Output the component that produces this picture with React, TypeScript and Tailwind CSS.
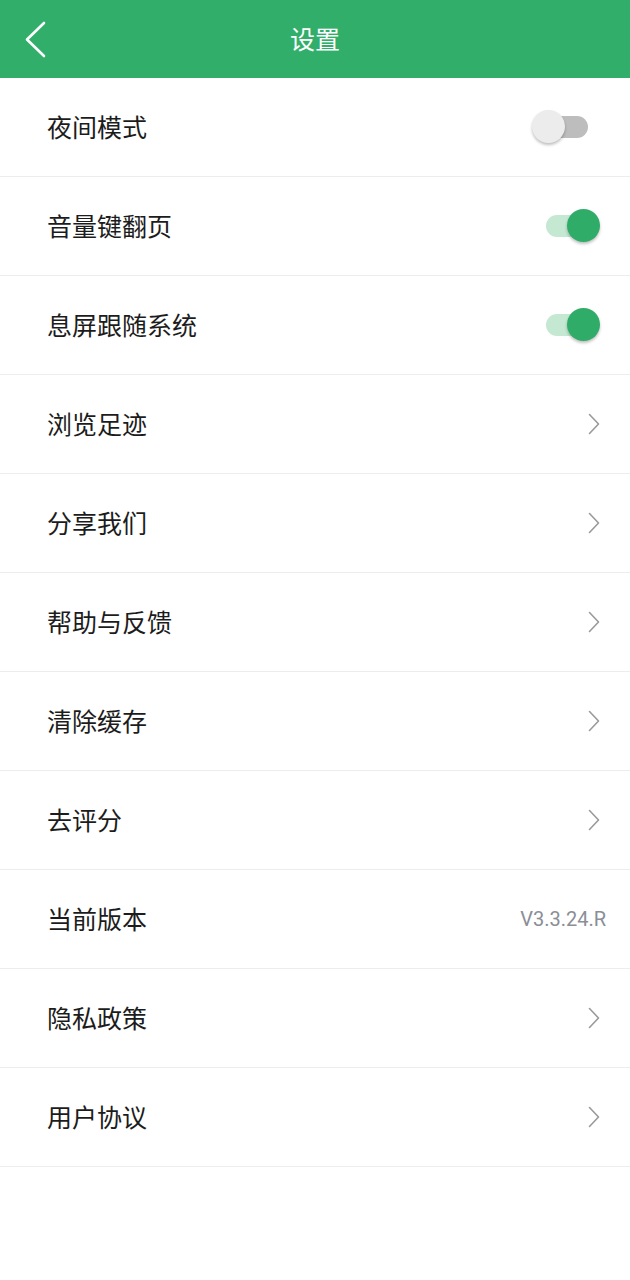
import { useState } from "react";

type Row = { label: string; kind: "switch" | "link" | "text"; on?: boolean; value?: string };

const rows: Row[] = [
  { label: "夜间模式", kind: "switch", on: false },
  { label: "音量键翻页", kind: "switch", on: true },
  { label: "息屏跟随系统", kind: "switch", on: true },
  { label: "浏览足迹", kind: "link" },
  { label: "分享我们", kind: "link" },
  { label: "帮助与反馈", kind: "link" },
  { label: "清除缓存", kind: "link" },
  { label: "去评分", kind: "link" },
  { label: "当前版本", kind: "text", value: "V3.3.24.R" },
  { label: "隐私政策", kind: "link" },
  { label: "用户协议", kind: "link" },
];

function Toggle({ initial }: { initial: boolean }) {
  const [on, setOn] = useState(initial);
  return (
    <button onClick={() => setOn(!on)} className="relative h-[34px] w-[68px]">
      <span
        className={`absolute left-[14px] top-[6px] h-[22px] w-[42px] rounded-full ${
          on ? "bg-[#c4e8d2]" : "bg-[#bdbdbd]"
        }`}
      />
      <span
        className={`absolute top-0 h-[33px] w-[33px] rounded-full shadow-[0_2px_3px_rgba(0,0,0,0.25)] ${
          on ? "left-[35px] bg-[#2fad68]" : "left-0 bg-[#ececec]"
        }`}
      />
    </button>
  );
}

export default function App() {
  return (
    <div className="min-h-[1280px] w-[630px] bg-white font-['Noto_Sans_CJK_SC',sans-serif]">
      <header className="relative flex h-[78px] items-center justify-center bg-[#31af6a]">
        <svg className="absolute left-[24px] top-[21px]" width="22" height="37" viewBox="0 0 22 37" fill="none">
          <path d="M20 2L3 18.5L20 35" stroke="white" strokeWidth="2.6" strokeLinecap="round" strokeLinejoin="round" />
        </svg>
        <h1 className="text-[25px] text-white">设置</h1>
      </header>
      <ul>
        {rows.map((r) => (
          <li
            key={r.label}
            className="flex h-[99px] items-center justify-between border-b border-[#ededed] pl-[47px] pr-[30px]"
          >
            <span className="text-[25px] text-[#1c1c1c]">{r.label}</span>
            {r.kind === "switch" && <Toggle initial={!!r.on} />}
            {r.kind === "link" && (
              <svg width="12" height="22" viewBox="0 0 12 22" fill="none">
                <path d="M1.5 1.5L10.5 11L1.5 20.5" stroke="#9a9a9a" strokeWidth="1.6" strokeLinecap="round" strokeLinejoin="round" />
              </svg>
            )}
            {r.kind === "text" && (
              <span className="mr-[-6px] font-['Roboto',sans-serif] text-[20px] text-[#8a8e96]">{r.value}</span>
            )}
          </li>
        ))}
      </ul>
    </div>
  );
}
